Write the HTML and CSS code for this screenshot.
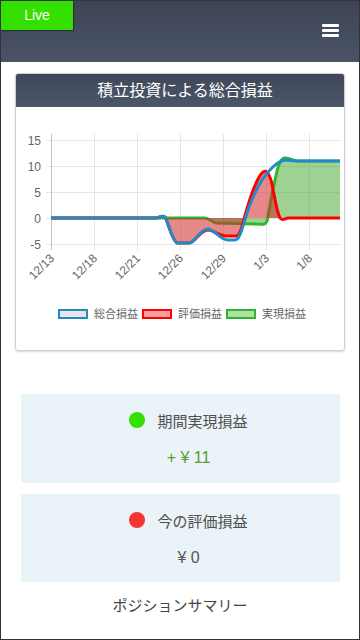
FILE: index.html
```html
<!DOCTYPE html>
<html lang="ja">

<head>
    <meta charset="UTF-8">
    <meta name="viewport" content="width=device-width, initial-scale=1.0">
    <title>積立投資</title>
    <link rel="stylesheet" href="styles.css">
</head>

<body>
    <div class="page">
        <header class="topbar">
            <div class="live">Live</div>
            <button class="menu" aria-label="menu">
                <span></span><span></span><span></span>
            </button>
        </header>

        <div class="card">
            <div class="card-head">積立投資による総合損益</div>
            <div class="card-body">
                <svg class="chart" viewBox="16 107 328 185" width="328" height="185">
                    <!-- grid -->
                    <g stroke="#e6e6e6" stroke-width="1">
                        <line x1="46" y1="140.5" x2="340" y2="140.5" />
                        <line x1="46" y1="166.5" x2="340" y2="166.5" />
                        <line x1="46" y1="192.5" x2="340" y2="192.5" />
                        <line x1="46" y1="218.5" x2="340" y2="218.5" />
                        <line x1="46" y1="244.5" x2="340" y2="244.5" />
                        <line x1="94.5" y1="134" x2="94.5" y2="250" />
                        <line x1="137.5" y1="134" x2="137.5" y2="250" />
                        <line x1="180.5" y1="134" x2="180.5" y2="250" />
                        <line x1="223.5" y1="134" x2="223.5" y2="250" />
                        <line x1="266.5" y1="134" x2="266.5" y2="250" />
                        <line x1="309.5" y1="134" x2="309.5" y2="250" />
                    </g>
                    <line x1="51.5" y1="134" x2="51.5" y2="250" stroke="#c4c4c4" />

                    <g class="ticks" text-anchor="end">
                        <text x="41" y="144.5">15</text>
                        <text x="41" y="170.5">10</text>
                        <text x="41" y="196.5">5</text>
                        <text x="41" y="222.5">0</text>
                        <text x="41" y="248.5">-5</text>
                    </g>
                    <g class="ticks" text-anchor="end">
                        <text transform="translate(55 259) rotate(-45)">12/13</text>
                        <text transform="translate(98 259) rotate(-45)">12/18</text>
                        <text transform="translate(141 259) rotate(-45)">12/21</text>
                        <text transform="translate(184 259) rotate(-45)">12/26</text>
                        <text transform="translate(227 259) rotate(-45)">12/29</text>
                        <text transform="translate(270 259) rotate(-45)">1/3</text>
                        <text transform="translate(313 259) rotate(-45)">1/8</text>
                    </g>

                    <!-- 実現損益 -->
                    <path fill="rgba(60,165,40,0.5)" d="M51,218 L205,218 C209,218 212,222 216,223 L258,224 C262,224 265,226 267,221 C269,214 271,196 274,185 C277,170 279,160 284,158 C288,157 292,161 298,161 L340,161 L340,218 Z" />
                    <path fill="none" stroke="#2fb52f" stroke-width="3" d="M51,218 L205,218 C209,218 212,222 216,223 L258,224 C262,224 265,226 267,221 C269,214 271,196 274,185 C277,170 279,160 284,158 C288,157 292,161 298,161 L340,161" />

                    <!-- 評価損益 -->
                    <path fill="rgba(210,40,40,0.55)" d="M51,218 L157,218 C160,217 162,215 165,217 C168,222 172,240 177,243 L189,243 C195,243 200,230 208,230 C214,230 218,236 226,236 L236,236 C241,236 242,225 246,212 C250,198 256,180 262,173 C266,169 268,172 271,180 C274,192 276,210 280,218 C282,221 284,219 288,218 L340,218 Z" />
                    <path fill="none" stroke="#ff0000" stroke-width="3" d="M51,218 L157,218 C160,217 162,215 165,217 C168,222 172,240 177,243 L189,243 C195,243 200,230 208,230 C214,230 218,236 226,236 L236,236 C241,236 242,225 246,212 C250,198 256,180 262,173 C266,169 268,172 271,180 C274,192 276,210 280,218 C282,221 284,219 288,218 L340,218" />

                    <!-- 総合損益 -->
                    <path fill="none" stroke="#2389c9" stroke-width="3" d="M51,218 L157,218 C160,217 162,215 165,217 C168,222 172,240 177,243 L189,243 C195,243 200,229 208,229 C214,229 220,240 228,240 L235,240 C240,240 242,228 248,210 C254,193 262,178 270,170 C276,164 279,161 285,160 C290,160 292,161 300,161 L340,161" />
                </svg>

                <div class="legend">
                    <div class="legend-item"><span class="box box-total"></span>総合損益</div>
                    <div class="legend-item"><span class="box box-eval"></span>評価損益</div>
                    <div class="legend-item"><span class="box box-real"></span>実現損益</div>
                </div>
            </div>
        </div>

        <div class="summary">
            <div class="stat">
                <div class="stat-label"><span class="dot dot-green"></span>期間実現損益</div>
                <div class="stat-value plus">+ ¥ 11</div>
            </div>
            <div class="stat">
                <div class="stat-label"><span class="dot dot-red"></span>今の評価損益</div>
                <div class="stat-value">¥ 0</div>
            </div>
        </div>

        <div class="section-title">ポジションサマリー</div>
    </div>
</body>

</html>
```

FILE: styles.css
```css
body {
    margin: 0;
    padding: 0;
    font-family: "Liberation Sans", "Noto Sans CJK JP", sans-serif;
    background-color: #fff;
}

.page {
    box-sizing: border-box;
    width: 360px;
    height: 640px;
    border: 1px solid #333;
    overflow: hidden;
}

.topbar {
    height: 61px;
    background-image: linear-gradient(to bottom, #3c4355, #4b5467);
    display: flex;
    justify-content: space-between;
    align-items: flex-start;
}

.live {
    width: 72px;
    height: 29px;
    line-height: 29px;
    text-align: center;
    background-color: #33e000;
    color: #fff;
    font-size: 14px;
    box-shadow: 1px 1px 1px rgba(0, 0, 0, 0.35);
}

.menu {
    margin: 23px 20px 0 0;
    padding: 0;
    border: none;
    background: none;
    display: flex;
    flex-direction: column;
    gap: 2px;
}

.menu span {
    display: block;
    width: 17px;
    height: 3px;
    border-radius: 1px;
    background-color: #fff;
}

.card {
    margin: 11px 14px 0 14px;
    border: 1px solid #d0d0d0;
    border-radius: 3px;
    box-shadow: 0 1px 2px rgba(0, 0, 0, 0.15);
    overflow: hidden;
}

.card-head {
    height: 33px;
    line-height: 33px;
    padding-left: 10px;
    text-align: center;
    color: #fff;
    font-size: 16px;
    background-image: linear-gradient(to bottom, #3f4759, #4d5669);
}

.card-body {
    padding-bottom: 30px;
}

.chart {
    display: block;
}

.ticks text {
    font-family: "Liberation Sans", sans-serif;
    font-size: 12px;
    fill: #666;
}

.legend {
    margin-top: 16px;
    padding-left: 4px;
    height: 12px;
    display: flex;
    justify-content: center;
    gap: 4px;
    font-size: 11px;
    color: #666;
}

.legend-item {
    display: flex;
    align-items: center;
    line-height: 12px;
}

.box {
    box-sizing: border-box;
    width: 30px;
    height: 10px;
    margin-right: 6px;
    border: 2px solid;
}

.box-total {
    border-color: #2389c9;
    background-color: #e6e6e6;
}

.box-eval {
    border-color: #ff0000;
    background-color: #f7a0a0;
}

.box-real {
    border-color: #2fb52f;
    background-color: #b0e0a6;
}

.summary {
    margin: 43px 19px 0 20px;
    display: flex;
    flex-direction: column;
    gap: 11px;
}

.stat {
    background-color: #eaf3f7;
    border-radius: 3px;
    padding: 15px 0 14px 16px;
    text-align: center;
}

.stat + .stat {
    padding-top: 15px;
    padding-bottom: 13px;
}

.stat-label {
    height: 22px;
    display: flex;
    justify-content: center;
    align-items: center;
    font-size: 15px;
    color: #505050;
}

.dot {
    width: 16px;
    height: 16px;
    border-radius: 50%;
    margin-right: 12px;
}

.dot-green {
    background-color: #33e000;
}

.dot-red {
    background-color: #f53434;
}

.stat-value {
    margin-top: 16px;
    height: 22px;
    line-height: 22px;
    font-size: 16px;
    color: #555;
}

.plus {
    color: #5a9a32;
}

.section-title {
    margin-top: 12px;
    text-align: center;
    font-size: 15px;
    color: #444;
}
```
